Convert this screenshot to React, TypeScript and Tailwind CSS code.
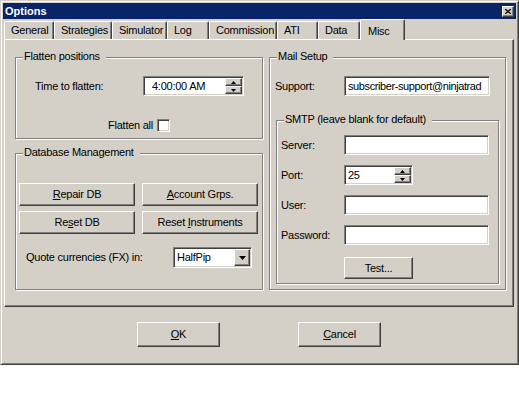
import type { ReactNode } from "react";

// Windows Classic bevels, reused across controls.
const raised =
  "border border-t-white border-l-white border-r-[#404040] border-b-[#404040] shadow-[inset_-1px_-1px_0_#808080]";
const sunken =
  "border border-t-[#808080] border-l-[#808080] border-r-white border-b-white shadow-[inset_1px_1px_0_#404040,inset_-1px_-1px_0_#d4d0c8]";
const etched = "border border-[#808080] shadow-[inset_1px_1px_0_#fff,1px_1px_0_#fff]";

function Group({
  label,
  className,
  children,
}: {
  label: string;
  className?: string;
  children?: ReactNode;
}) {
  return (
    <div className={`relative flex flex-col ${etched} ${className ?? ""}`}>
      <span className="absolute -top-[8px] left-[7px] bg-[#d4d0c8] pl-[1px] pr-[6px] leading-[13px]">
        {label}
      </span>
      {children}
    </div>
  );
}

function Button({ className, children }: { className?: string; children: ReactNode }) {
  return (
    <div className={`flex items-center justify-center bg-[#d4d0c8] ${raised} ${className ?? ""}`}>
      {children}
    </div>
  );
}

function Arrow({ up }: { up?: boolean }) {
  return (
    <svg width="5" height="3" viewBox="0 0 5 3" className="block">
      <path d={up ? "M2.5 0 L5 3 L0 3 Z" : "M0 0 L5 0 L2.5 3 Z"} fill="#000" />
    </svg>
  );
}

function Spin({ value, className }: { value: string; className: string }) {
  return (
    <div className={`flex h-[20px] items-center bg-white ${sunken} ${className}`}>
      <span className="flex-1 leading-none">{value}</span>
      <div className="mr-[1px] flex h-[16px] w-[17px] flex-col">
        <div className={`flex h-[8px] items-center justify-center bg-[#d4d0c8] ${raised}`}>
          <Arrow up />
        </div>
        <div className={`flex h-[8px] items-center justify-center bg-[#d4d0c8] ${raised}`}>
          <Arrow />
        </div>
      </div>
    </div>
  );
}

function Field({ className, children }: { className: string; children?: ReactNode }) {
  return (
    <div
      className={`flex h-[20px] items-center overflow-hidden whitespace-nowrap bg-white pl-[3px] ${sunken} ${className}`}
    >
      {children}
    </div>
  );
}

const tabs = [
  { name: "General", w: "w-[50px]" },
  { name: "Strategies", w: "w-[58px]" },
  { name: "Simulator", w: "w-[55px]" },
  { name: "Log", w: "w-[42px]" },
  { name: "Commission", w: "w-[68px]" },
  { name: "ATI", w: "w-[41px]" },
  { name: "Data", w: "w-[42px]" },
  { name: "Misc", w: "w-[45px]", active: true },
];

export default function App() {
  return (
    <div className="h-[400px] w-[519px] bg-white font-['Liberation_Sans',Arial,sans-serif] text-[11px] tracking-[-0.25px] text-black">
      <div className="flex h-[365px] w-[519px] flex-col border border-t-[#d4d0c8] border-l-[#d4d0c8] border-r-[#404040] border-b-[#404040] bg-[#d4d0c8] p-[2px] shadow-[inset_1px_1px_0_#fff,inset_-1px_-1px_0_#808080]">
        {/* title bar */}
        <div className="flex h-[16px] items-center justify-between bg-[#0a246a] pl-[2px] pr-[2px]">
          <span className="text-[11px] font-bold tracking-normal text-white">Options</span>
          <div className={`flex h-[11px] w-[12px] items-center justify-center bg-[#d4d0c8] ${raised}`}>
            <svg width="6" height="5" viewBox="0 0 6 5">
              <path d="M0 0 L6 5 M6 0 L0 5" stroke="#000" strokeWidth="1.3" />
            </svg>
          </div>
        </div>

        {/* tabs */}
        <div className="ml-[1px] flex h-[20px] items-end">
          {tabs.map((t) =>
            t.active ? (
              <div
                key={t.name}
                className={`relative z-10 -mb-[1px] flex h-[21px] ${t.w} items-start rounded-t-[2px] border-t border-l border-r border-t-white border-l-white border-r-[#404040] bg-[#d4d0c8] pl-[7px] pt-[3px] shadow-[inset_-1px_0_0_#808080]`}
              >
                {t.name}
              </div>
            ) : (
              <div
                key={t.name}
                className={`flex h-[18px] ${t.w} items-center rounded-t-[2px] border-t border-l border-r border-t-white border-l-white border-r-[#404040] pl-[6px] pb-[1px] shadow-[inset_-1px_0_0_#808080]`}
              >
                {t.name}
              </div>
            ),
          )}
        </div>

        {/* tab panel */}
        <div className={`ml-[1px] flex h-[268px] w-[510px] ${raised} pl-[10px] pt-[17px]`}>
          {/* left column */}
          <div className="flex w-[248px] flex-col">
            <Group label="Flatten positions" className="h-[82px]">
              <div className="mt-[18px] flex items-center pl-[19px]">
                <span className="w-[108px]">Time to flatten:</span>
                <Spin value="4:00:00 AM" className="w-[101px] pl-[8px]" />
              </div>
              <div className="mt-[21px] flex items-center">
                <span className="flex w-[141px] justify-end pr-[4px]">Flatten all</span>
                <div className={`h-[13px] w-[13px] bg-white ${sunken}`} />
              </div>
            </Group>

            <Group label="Database Management" className="mt-[14px] h-[137px]">
              <div className="mt-[29px] grid grid-cols-[116px_116px] gap-x-[7px] gap-y-[5px] pl-[3px]">
                <Button className="h-[23px]">
                  <span>
                    <span className="underline">R</span>epair DB
                  </span>
                </Button>
                <Button className="h-[23px]">
                  <span>
                    <span className="underline">A</span>ccount Grps.
                  </span>
                </Button>
                <Button className="h-[23px]">
                  <span>
                    Re<span className="underline">s</span>et DB
                  </span>
                </Button>
                <Button className="h-[23px]">
                  <span>
                    Reset <span className="underline">I</span>nstruments
                  </span>
                </Button>
              </div>
              <div className="mt-[13px] flex items-center pl-[10px]">
                <span className="w-[147px]">Quote currencies (FX) in:</span>
                <div className={`flex h-[21px] w-[79px] items-center bg-white pl-[3px] ${sunken}`}>
                  <span className="flex-1">HalfPip</span>
                  <div className={`mr-[1px] flex h-[17px] w-[16px] items-center justify-center bg-[#d4d0c8] ${raised}`}>
                    <svg width="7" height="4" viewBox="0 0 7 4">
                      <path d="M0 0 L7 0 L3.5 4 Z" fill="#000" />
                    </svg>
                  </div>
                </div>
              </div>
            </Group>
          </div>

          {/* right column */}
          <div className="ml-[6px] flex w-[237px] flex-col">
            <Group label="Mail Setup" className="h-[233px]">
              <div className="mt-[18px] flex items-center pl-[5px]">
                <span className="w-[69px]">Support:</span>
                <Field className="w-[146px] tracking-[-0.4px]">subscriber-support@ninjatrad</Field>
              </div>

              <Group label="SMTP (leave blank for default)" className="ml-[6px] mt-[24px] h-[164px] w-[223px]">
                <div className="mt-[14px] flex items-center pl-[4px]">
                  <span className="w-[63px]">Server:</span>
                  <Field className="w-[145px]" />
                </div>
                <div className="mt-[10px] flex items-center pl-[4px]">
                  <span className="w-[63px]">Port:</span>
                  <Spin value="25" className="w-[69px] pl-[3px]" />
                </div>
                <div className="mt-[10px] flex items-center pl-[4px]">
                  <span className="w-[63px]">User:</span>
                  <Field className="w-[145px]" />
                </div>
                <div className="mt-[10px] flex items-center pl-[4px]">
                  <span className="w-[63px]">Password:</span>
                  <Field className="w-[145px]" />
                </div>
                <Button className="ml-[67px] mt-[12px] h-[22px] w-[69px]">Test...</Button>
              </Group>
            </Group>
          </div>
        </div>

        {/* dialog buttons */}
        <div className="mt-[15px] flex pl-[134px]">
          <Button className="h-[25px] w-[83px]">
            <span>
              <span className="underline">O</span>K
            </span>
          </Button>
          <Button className="ml-[78px] h-[25px] w-[83px]">
            <span>
              <span className="underline">C</span>ancel
            </span>
          </Button>
        </div>
      </div>
    </div>
  );
}
